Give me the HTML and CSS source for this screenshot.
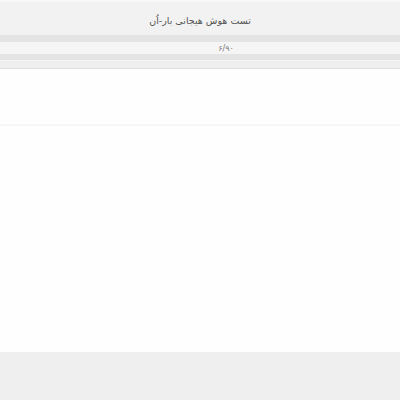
FILE: index.html
```html
<!DOCTYPE html>
<html lang="fa" dir="rtl">
<head>
<meta charset="UTF-8">
<title>تست هوش هیجانی بار-اُن</title>
<link rel="stylesheet" href="styles.css">
</head>
<body>
    <div class="header">
        <h1>تست هوش هیجانی بار-اُن</h1>
    </div>

    <div class="progress-wrap">
        <div class="progress">
            <span class="progress-text">۶/۹۰</span>
        </div>
    </div>

    <div class="toolbar"></div>

    <!-- Question card -->
    <div class="card">
        <div class="question"></div>
        <div class="answers"></div>
    </div>
</body>
</html>
```

FILE: styles.css
```css
body {
    font-family: "DejaVu Sans", "Noto Sans", sans-serif;
    background-color: #efefef;
    margin: 0;
    padding: 0;
}

.header {
    background-color: #f2f2f2;
    border-top: 2px solid #f7f7f7;
    height: 33px;
    display: flex;
    align-items: center;
    justify-content: center;
    padding-top: 3px;
    box-sizing: border-box;
    height: 35px;
}

.header h1 {
    margin: 0;
    font-size: 9.5px;
    font-weight: normal;
    color: #555;
}

.progress-wrap {
    background-color: #e4e4e4;
    padding: 7px 0 6px;
}

.progress {
    background-color: #f5f5f5;
    height: 12px;
    display: flex;
    align-items: center;
    justify-content: center;
}

.progress-text {
    font-size: 8px;
    color: #777;
    margin-left: 52px;
}

.toolbar {
    background-color: #efefef;
    height: 7px;
    border-top: 1px solid #f5f5f5;
    border-bottom: 1px solid #e2e2e2;
}

.card {
    background-color: #fefefe;
    box-shadow: 0 1px 3px rgba(0, 0, 0, 0.12);
}

.question {
    height: 55px;
    border-bottom: 2px solid #f7f7f7;
}

.answers {
    height: 226px;
}
```
